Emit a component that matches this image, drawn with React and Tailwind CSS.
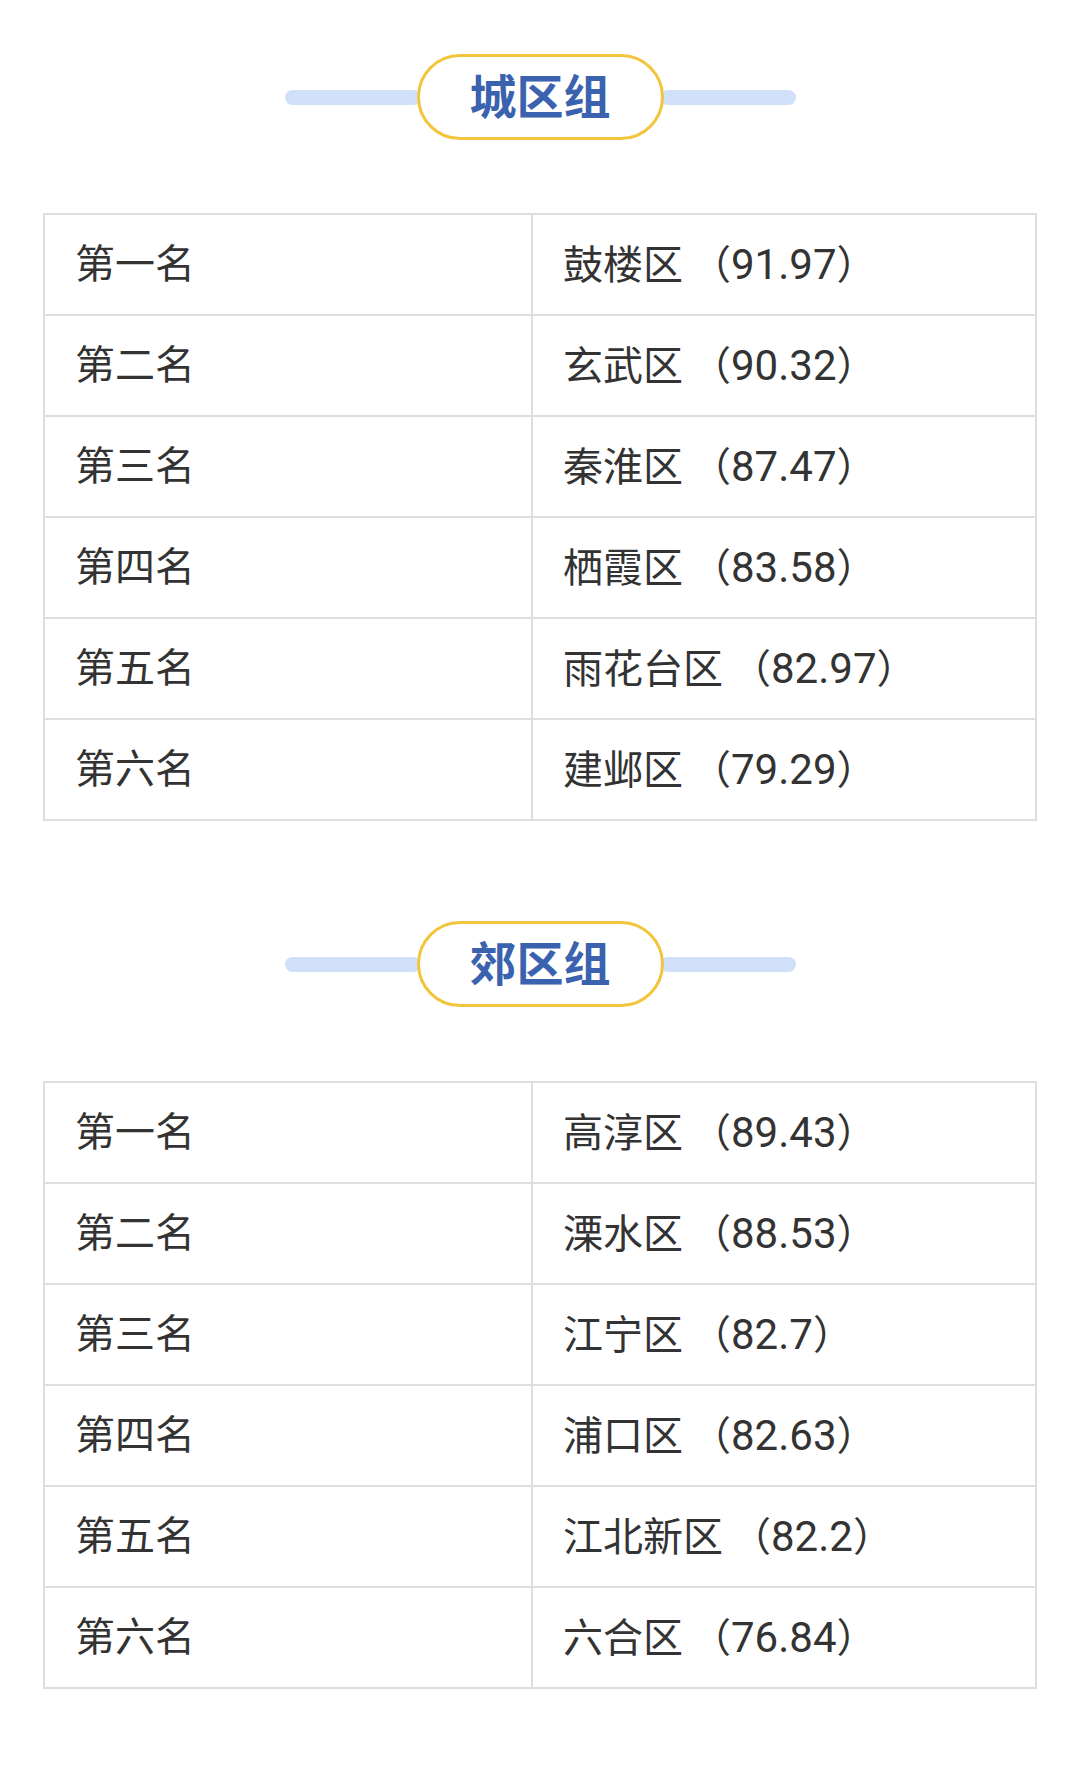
import React from "react";

const urban = [
  ["第一名", "鼓楼区", "91.97"],
  ["第二名", "玄武区", "90.32"],
  ["第三名", "秦淮区", "87.47"],
  ["第四名", "栖霞区", "83.58"],
  ["第五名", "雨花台区", "82.97"],
  ["第六名", "建邺区", "79.29"],
];

const suburb = [
  ["第一名", "高淳区", "89.43"],
  ["第二名", "溧水区", "88.53"],
  ["第三名", "江宁区", "82.7"],
  ["第四名", "浦口区", "82.63"],
  ["第五名", "江北新区", "82.2"],
  ["第六名", "六合区", "76.84"],
];

function Header({ title }) {
  return (
    <div className="flex items-center justify-center h-[86px]">
      <div className="w-[136px] h-[15px] rounded-full bg-[#cfe0f8] -mr-[4px]" />
      <div className="relative z-10 w-[247px] h-[86px] rounded-full border-[3px] border-[#f2c53d] bg-white flex items-center justify-center">
        <span className="text-[47px] font-bold text-[#3a62ae] leading-none">{title}</span>
      </div>
      <div className="w-[136px] h-[15px] rounded-full bg-[#cfe0f8] -ml-[4px]" />
    </div>
  );
}

function Table({ rows }) {
  return (
    <div className="border-2 border-[#dedede]">
      {rows.map(([a, name, score], i) => (
        <div
          key={i}
          className={`flex ${i > 0 ? "h-[101px] border-t-2 border-[#dedede]" : "h-[99px]"}`}
        >
          <div className="w-[488px] flex items-center pl-[30px] border-r-2 border-[#dedede] text-[40px] text-[#333333]">
            {a}
          </div>
          <div className="flex-1 flex items-center pl-[30px] text-[40px] text-[#333333]">
            <span>
              {name}
              <span className="ml-[8px]">（</span>
              <span className="text-[42px]">{score}</span>）
            </span>
          </div>
        </div>
      ))}
    </div>
  );
}

export default function App() {
  return (
    <div
      className="w-[1080px] min-h-[1784px] bg-white px-[43px] pt-[54px]"
      style={{ fontFamily: 'Roboto, "Noto Sans CJK SC", sans-serif' }}
    >
      <Header title="城区组" />
      <div className="mt-[73px]">
        <Table rows={urban} />
      </div>
      <div className="mt-[100px]">
        <Header title="郊区组" />
      </div>
      <div className="mt-[74px]">
        <Table rows={suburb} />
      </div>
    </div>
  );
}
